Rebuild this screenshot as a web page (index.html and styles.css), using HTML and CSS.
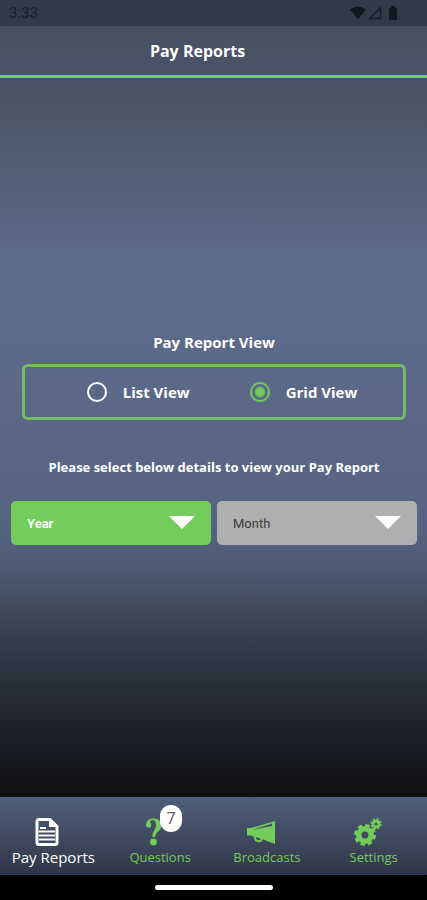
FILE: index.html
```html
<!DOCTYPE html>
<html lang="en">
<head>
    <meta charset="UTF-8">
    <meta name="viewport" content="width=device-width, initial-scale=1.0">
    <title>Pay Reports</title>
    <link rel="stylesheet" href="styles.css">
</head>
<body>
    <div class="status-bar">
        <span class="clock">3:33</span>
        <svg class="status-icons" viewBox="0 0 48 14" width="48" height="14" aria-hidden="true">
            <path d="M0 3.500Q8 -2.500 16 3.500L8 13.500Z"/>
            <path class="signal" d="M19.500 12.500L30.500 2V12.500Z"/>
            <path d="M39 2h2V0h4v2h2v12h-8z"/>
        </svg>
    </div>

    <header class="app-header">
        <h1>Pay Reports</h1>
    </header>

    <main class="content">
        <fieldset class="view-picker">
            <legend>Pay Report View</legend>
            <div class="view-options">
                <label><input type="radio" name="view" value="list">List View</label>
                <label><input type="radio" name="view" value="grid" checked>Grid View</label>
            </div>
        </fieldset>

        <p class="hint">Please select below details to view your Pay Report</p>

        <div class="filters">
            <div class="select-box year">
                <select aria-label="Year">
                    <option>Year</option>
                </select>
            </div>
            <div class="select-box month">
                <select aria-label="Month">
                    <option>Month</option>
                </select>
            </div>
        </div>
    </main>

    <nav class="tab-bar">
        <a class="tab active" href="#reports">
            <svg viewBox="0 0 24 28" width="24" height="28" aria-hidden="true">
                <path d="M4 1.500h11l7 7v16a2 2 0 0 1-2 2H4a2 2 0 0 1-2-2v-21a2 2 0 0 1 2-2z" fill="none" stroke="currentColor" stroke-width="3"/>
                <path d="M14 1v8h8z" fill="currentColor"/>
                <path d="M5 10h6M4 13.500h16M4 17.500h16M4 21.500h16" stroke="currentColor" stroke-width="2"/>
            </svg>
            <span>Pay Reports</span>
        </a>
        <a class="tab" href="#questions">
            <span class="icon-wrap">
                <svg viewBox="0 0 28 28" width="28" height="28" aria-hidden="true">
                    <path d="M0 7C0 3 3 .5 7.500.5S15.500 3 15.500 7.500c0 5-5.500 6-6.500 11.500H6.500C6 13.500 10 12 10 7 10 4 9 2 6.500 2 5 2 4 2.700 4 4c0 1 1.300 1.500 1.300 3S4.300 9.800 2.700 9.800 0 8.800 0 7z" fill="currentColor"/>
                    <circle cx="7.500" cy="24" r="3.400" fill="currentColor"/>
                </svg>
                <span class="badge">7</span>
            </span>
            <span>Questions</span>
        </a>
        <a class="tab" href="#broadcasts">
            <svg viewBox="0 0 28 28" width="28" height="28" aria-hidden="true">
                <path d="M0 10h4L28 3v23L16 21.500 4 17.500H0z" fill="currentColor"/>
                <path d="M5 11.800L25 5.500V8z" fill="#435069"/>
                <path d="M7.500 18.500c0 5 6 6 7.500 2.500" fill="none" stroke="currentColor" stroke-width="2"/>
            </svg>
            <span>Broadcasts</span>
        </a>
        <a class="tab" href="#settings">
            <svg viewBox="0 0 28 28" width="28" height="28" aria-hidden="true">
                <g fill="none" stroke="currentColor">
                    <circle cx="11" cy="17" r="6.200" stroke-width="5.400"/>
                    <circle cx="11" cy="17" r="9.500" stroke-width="3" stroke-dasharray="4.300 3.160"/>
                    <circle cx="22" cy="6" r="3" stroke-width="2.800"/>
                    <circle cx="22" cy="6" r="4.800" stroke-width="1.800" stroke-dasharray="2.100 1.670"/>
                </g>
            </svg>
            <span>Settings</span>
        </a>
    </nav>

    <div class="home-area"><div class="home-handle"></div></div>
</body>
</html>
```
FILE: styles.css
```css
* {
    box-sizing: border-box;
}

body {
    margin: 0;
    min-height: 100vh;
    display: flex;
    flex-direction: column;
    font-family: "Open Sans", sans-serif;
    color: white;
    background: #000;
}

.status-bar {
    height: 26px;
    padding: 0 29px 0 9px;
    display: flex;
    justify-content: space-between;
    align-items: center;
    background: #333a47;
    color: #171d28;
}

.clock {
    font-family: Roboto, sans-serif;
    font-size: 15px;
}

.status-icons {
    fill: #111722;
}

.status-icons .signal {
    fill: none;
    stroke: #171d28;
    stroke-width: 1.5;
}

.app-header {
    height: 52px;
    padding-right: 32px;
    display: flex;
    justify-content: center;
    align-items: center;
    background: linear-gradient(#465161, #4a5369);
    border-bottom: 3px solid #74cc5a;
}

h1 {
    margin: 0;
    font-size: 16px;
    line-height: 24px;
}

.content {
    flex: 1;
    display: flex;
    flex-direction: column;
    justify-content: center;
    padding: 0 10px 0 11px;
    background: linear-gradient(#4a5369 0%, #4b5667 4%, #5d6c8b 26%, #5a6886 48%, #566482 62%, #4e5b74 68%, #3a4453 76%, #262b36 86%, #171a20 94%, #0f0f10 100%);
}

.view-picker {
    margin: 0 11px;
    padding: 0;
    border: 0;
    font-size: 15px;
    font-weight: bold;
    line-height: 24px;
}

.view-picker legend {
    width: 100%;
    padding: 0 0 10px;
    text-align: center;
}

.view-options {
    display: flex;
    justify-content: center;
    gap: 60px;
    padding: 13px 0 13px 16px;
    border: 3px solid #74bc66;
    border-radius: 6px;
}

.view-options label {
    display: flex;
    align-items: center;
    gap: 16px;
}

.view-options input {
    appearance: none;
    width: 20px;
    height: 20px;
    margin: 0;
    border: 2px solid white;
    border-radius: 50%;
}

.view-options input:checked {
    border-color: #74cc5a;
    background: radial-gradient(circle, #74cc5a 4px, transparent 6px);
}

.hint {
    margin: 37px 0 24px;
    font-size: 13px;
    font-weight: bold;
    line-height: 20px;
    text-align: center;
}

.filters {
    display: flex;
    gap: 6px;
}

.select-box {
    flex: 1;
    position: relative;
}

.select-box::after {
    content: "";
    position: absolute;
    top: 15px;
    right: 16px;
    border: 13px solid transparent;
    border-top-color: white;
    border-bottom: 0;
    pointer-events: none;
}

.select-box select {
    appearance: none;
    display: block;
    width: 100%;
    height: 44px;
    padding: 0 16px;
    border: 0;
    border-radius: 5px;
    font-family: Roboto, sans-serif;
    font-size: 13px;
}

.year select {
    background: #74cc5a;
    color: white;
    font-weight: bold;
}

.month select {
    background: #adafb0;
    color: #3c3c3c;
}

.tab-bar {
    display: grid;
    grid-template-columns: repeat(4, 1fr);
    height: 78px;
    padding-top: 21px;
    background: linear-gradient(#50607a, #2f3547);
}

.tab {
    display: flex;
    flex-direction: column;
    align-items: center;
    color: #74cc5a;
    font-size: 13px;
    line-height: 22px;
    text-decoration: none;
}

.tab.active {
    color: white;
    font-size: 15px;
}

.tab > svg {
    margin-right: 12px;
}

.icon-wrap {
    position: relative;
    height: 28px;
}

.badge {
    position: absolute;
    top: -13px;
    right: -8px;
    width: 22px;
    height: 27px;
    border-radius: 11px;
    background: white;
    color: #555;
    font-size: 16px;
    line-height: 27px;
    text-align: center;
}

.home-area {
    height: 25px;
    display: flex;
    justify-content: center;
    align-items: center;
    background: #000;
}

.home-handle {
    width: 118px;
    height: 5px;
    border-radius: 3px;
    background: white;
}
```
